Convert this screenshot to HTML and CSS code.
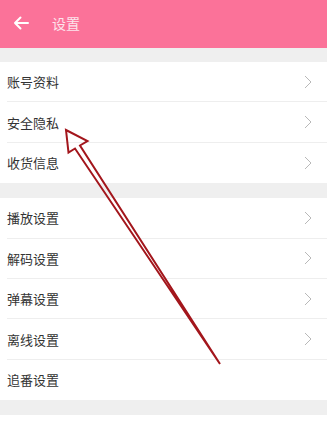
FILE: index.html
```html
<!DOCTYPE html>
<html>
<head>
    <meta charset="UTF-8">
    <meta name="viewport" content="width=device-width, initial-scale=1.0">
    <title>设置</title>
    <link rel="stylesheet" href="styles.css">
</head>
<body>
    <div class="topbar">
        <svg class="back" width="16" height="14" viewBox="0 0 16 14">
            <path d="M15 7H2M7.5 1.5L2 7l5.5 5.5" fill="none" stroke="#fff" stroke-width="2" stroke-linecap="round" stroke-linejoin="round"/>
        </svg>
        <span class="title">设置</span>
    </div>
    <div class="gap first"></div>
    <ul class="group">
        <li class="row"><span>账号资料</span><svg class="chev" width="8" height="14" viewBox="0 0 8 14"><path d="M1 1l6 6-6 6" fill="none" stroke="#b8b8b8" stroke-width="1"/></svg></li>
        <li class="row"><span>安全隐私</span><svg class="chev" width="8" height="14" viewBox="0 0 8 14"><path d="M1 1l6 6-6 6" fill="none" stroke="#b8b8b8" stroke-width="1"/></svg></li>
        <li class="row"><span>收货信息</span><svg class="chev" width="8" height="14" viewBox="0 0 8 14"><path d="M1 1l6 6-6 6" fill="none" stroke="#b8b8b8" stroke-width="1"/></svg></li>
    </ul>
    <div class="gap"></div>
    <ul class="group">
        <li class="row"><span>播放设置</span><svg class="chev" width="8" height="14" viewBox="0 0 8 14"><path d="M1 1l6 6-6 6" fill="none" stroke="#b8b8b8" stroke-width="1"/></svg></li>
        <li class="row"><span>解码设置</span><svg class="chev" width="8" height="14" viewBox="0 0 8 14"><path d="M1 1l6 6-6 6" fill="none" stroke="#b8b8b8" stroke-width="1"/></svg></li>
        <li class="row"><span>弹幕设置</span><svg class="chev" width="8" height="14" viewBox="0 0 8 14"><path d="M1 1l6 6-6 6" fill="none" stroke="#b8b8b8" stroke-width="1"/></svg></li>
        <li class="row"><span>离线设置</span><svg class="chev" width="8" height="14" viewBox="0 0 8 14"><path d="M1 1l6 6-6 6" fill="none" stroke="#b8b8b8" stroke-width="1"/></svg></li>
        <li class="row"><span>追番设置</span></li>
    </ul>
    <div class="gap"></div>

    <!-- red annotation arrow drawn over the screenshot -->
    <svg class="annotation" width="327" height="423" viewBox="0 0 327 423">
        <polygon points="66,130 87.5,141 80,145.5 220,364 75,148.5 68.5,152.5" fill="none" stroke="#a3161c" stroke-width="2" stroke-linejoin="miter"/>
    </svg>
</body>
</html>
```

FILE: styles.css
```css
* { box-sizing: border-box; }
body { margin: 0; font-family: "Noto Sans CJK SC", "Noto Sans", sans-serif; background: #fff; position: relative; }
.topbar { height: 48px; background: #fb7299; display: flex; align-items: center; padding-left: 13px; }
.back { display: block; margin-top: -2px; }
.title { margin-left: 23px; font-size: 14px; color: #fde4ec; margin-top: -3px; }
.gap { height: 15px; background: #efefef; }
.gap.first { height: 14px; }
.group { list-style: none; margin: 0; padding: 0; }
.row { height: 40.4px; margin-left: 7px; padding-right: 15px; display: flex; align-items: center; justify-content: space-between; border-bottom: 1px solid #eeeeee; font-size: 13px; color: #333; }
.row:last-child { border-bottom: none; }
.chev { display: block; }
.annotation { position: absolute; left: 0; top: 0; pointer-events: none; }
```
